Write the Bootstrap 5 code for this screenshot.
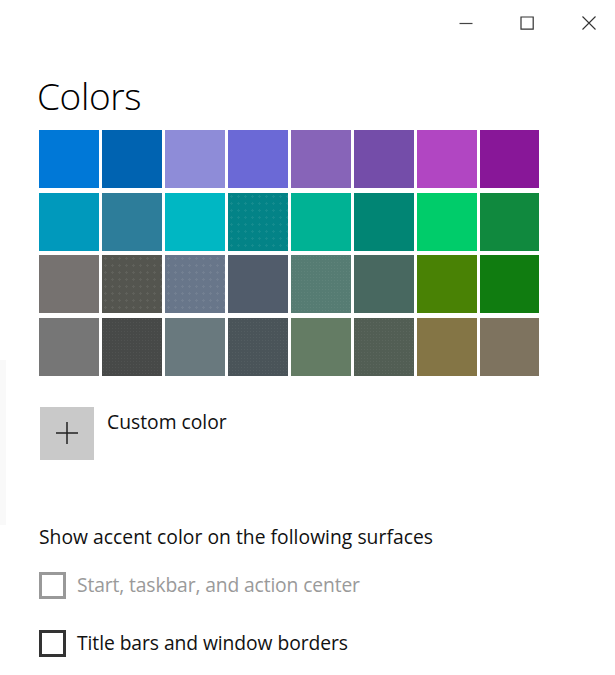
<!DOCTYPE html>
<html lang="en">
<head>
<meta charset="utf-8">
<title>Colors</title>
<link href="https://cdn.jsdelivr.net/npm/bootstrap@5.3.0/dist/css/bootstrap.min.css" rel="stylesheet">
<style>
html,body{height:675px;overflow:hidden;background:#fff}
body{font-family:"Open Sans","Liberation Sans",sans-serif;color:#111;position:relative}
.titlebar{height:46px;padding-left:435px}
.winbtn{flex:none;width:61.5px;height:46px;display:flex;align-items:center;justify-content:center;background:none;border:0;padding:0}
.pane{padding-left:39px}
.heading{font-family:"Open Sans",sans-serif;font-weight:300;font-size:37px;line-height:44px;margin:28px 0 12px -2px;color:#000;letter-spacing:-.35px}
.swatches{display:grid;grid-template-columns:repeat(8,59.6px);grid-auto-rows:58px;gap:4.5px 3.4px}
.sw{display:block}
.dots{background-size:7px 7px;background-image:radial-gradient(circle,rgba(255,255,255,.07) 1px,transparent 1.2px)}
.dots-fine{background-size:3px 3px;background-image:radial-gradient(circle,rgba(255,255,255,.05) .8px,transparent 1px)}
.customrow{margin-top:31px;height:53px;margin-left:1px}
.plusbox{width:54px;height:53px;background:#c9c9c9;border:0;padding:0}
.customlabel{font-size:19.3px;line-height:26px;margin-left:13px;margin-top:2px}
.surfhead{font-size:19.3px;line-height:26px;margin:64px 0 0;letter-spacing:.03px}
.opt{font-size:19.3px;line-height:26px;height:27px}
.opt-a{margin-top:22px;color:#9a9a9a;letter-spacing:-.13px}
.opt-b{margin-top:31px;letter-spacing:-.07px}
.tick{width:27px;height:27px;background:#fff;margin-right:11px;flex:none}
.tick-off{border:3px solid #999}
.tick-on{border:3px solid #333}
.edgeline{position:absolute;left:0;top:360px;width:6px;height:165px;background:#f9f9f9}
</style>
</head>
<body>
<div class="edgeline"></div>
<div class="titlebar d-flex">
  <button class="winbtn" aria-label="Minimize"><svg width="16" height="16" viewBox="0 0 16 16"><path d="M1.5 8.5h13" stroke="#444" stroke-width="1.2" fill="none"/></svg></button>
  <button class="winbtn" aria-label="Maximize"><svg width="16" height="16" viewBox="0 0 16 16"><path d="M2 2h12.2v12.2H2z" stroke="#333" stroke-width="1.2" fill="none"/></svg></button>
  <button class="winbtn" aria-label="Close"><svg width="16" height="16" viewBox="0 0 16 16"><path d="M1.5 1.5l13 13M14.5 1.5l-13 13" stroke="#333" stroke-width="1.1" fill="none"/></svg></button>
</div>
<main class="pane">
  <h1 class="heading">Colors</h1>
  <div class="swatches d-grid" id="g">
    <span class="sw" style="background-color:#0078d7"></span>
    <span class="sw" style="background-color:#0063b1"></span>
    <span class="sw" style="background-color:#8e8cd8"></span>
    <span class="sw" style="background-color:#6b69d6"></span>
    <span class="sw" style="background-color:#8764b8"></span>
    <span class="sw" style="background-color:#744da9"></span>
    <span class="sw" style="background-color:#b146c2"></span>
    <span class="sw" style="background-color:#881798"></span>
    <span class="sw" style="background-color:#0099bc"></span>
    <span class="sw" style="background-color:#2d7d9a"></span>
    <span class="sw" style="background-color:#00b7c3"></span>
    <span class="sw dots" style="background-color:#038387"></span>
    <span class="sw" style="background-color:#00b294"></span>
    <span class="sw" style="background-color:#018574"></span>
    <span class="sw" style="background-color:#00cc6a"></span>
    <span class="sw" style="background-color:#10893e"></span>
    <span class="sw" style="background-color:#767270"></span>
    <span class="sw dots" style="background-color:#54554f"></span>
    <span class="sw dots" style="background-color:#68768a"></span>
    <span class="sw" style="background-color:#515c6b"></span>
    <span class="sw dots-fine" style="background-color:#567c73"></span>
    <span class="sw" style="background-color:#486860"></span>
    <span class="sw" style="background-color:#498205"></span>
    <span class="sw" style="background-color:#107c10"></span>
    <span class="sw" style="background-color:#767676"></span>
    <span class="sw dots-fine" style="background-color:#474948"></span>
    <span class="sw" style="background-color:#69797e"></span>
    <span class="sw dots-fine" style="background-color:#4a5459"></span>
    <span class="sw" style="background-color:#647c64"></span>
    <span class="sw dots-fine" style="background-color:#525e54"></span>
    <span class="sw" style="background-color:#847545"></span>
    <span class="sw" style="background-color:#7e735f"></span>
  </div>
  <div class="customrow d-flex align-items-start">
    <button class="plusbox d-flex align-items-center justify-content-center" aria-label="Custom color"><svg width="22" height="22" viewBox="0 0 22 22"><path d="M11 0v22M0 11h22" stroke="#222" stroke-width="1.5" fill="none"/></svg></button>
    <span class="customlabel">Custom color</span>
  </div>
  <p class="surfhead">Show accent color on the following surfaces</p>
  <div class="opt opt-a d-flex align-items-center"><span class="tick tick-off"></span>Start, taskbar, and action center</div>
  <div class="opt opt-b d-flex align-items-center"><span class="tick tick-on"></span>Title bars and window borders</div>
</main>
<script src="https://cdn.jsdelivr.net/npm/bootstrap@5.3.0/dist/js/bootstrap.bundle.min.js"></script>
</body>
</html>
